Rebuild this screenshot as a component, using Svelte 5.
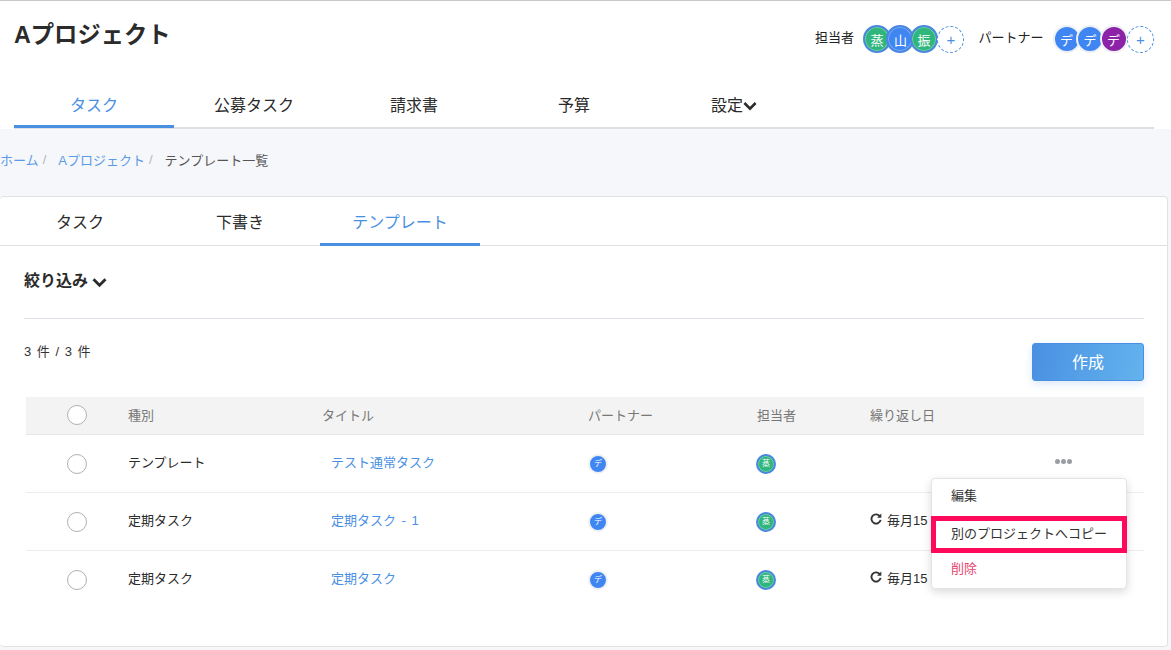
<script>
  const assignees = [
    { t: '蒸', c: 'green' },
    { t: '山', c: 'blue' },
    { t: '振', c: 'green' }
  ];
  const partners = [
    { t: 'デ', c: 'blue' },
    { t: 'デ', c: 'blue' },
    { t: 'デ', c: 'purple' }
  ];
  const mainTabs = ['タスク', '公募タスク', '請求書', '予算'];
  const rows = [
    { kind: 'テンプレート', title: 'テスト通常タスク', repeat: '' },
    { kind: '定期タスク', title: '定期タスク - 1', repeat: '毎月15' },
    { kind: '定期タスク', title: '定期タスク', repeat: '毎月15' }
  ];
</script>

<div class="page">
  <header class="header">
    <div class="top">
      <h1>Aプロジェクト</h1>
      <div class="people">
        <span class="label">担当者</span>
        <div class="stack">
          {#each assignees as a}
            <span class="av ring {a.c}">{a.t}</span>
          {/each}
          <span class="add">+</span>
        </div>
        <span class="label partner">パートナー</span>
        <div class="stack">
          {#each partners as p}
            <span class="av halo {p.c}">{p.t}</span>
          {/each}
          <span class="add">+</span>
        </div>
      </div>
    </div>
    <nav class="nav">
      {#each mainTabs as t, i}
        <span class="tab" class:on={i === 0}>{t}</span>
      {/each}
      <span class="tab">設定<svg class="chev" viewBox="0 0 14 10" width="14" height="10"><path d="M1.4 2 7 7.6 12.6 2" fill="none" stroke="#2b2b2b" stroke-width="2.6"/></svg></span>
    </nav>
  </header>

  <div class="crumbs">
    <span class="link">ホーム</span><span class="sep">/</span>
    <span class="link">Aプロジェクト</span><span class="sep">/</span>
    <span class="cur">テンプレート一覧</span>
  </div>

  <section class="card">
    <div class="subtabs">
      <span class="subtab">タスク</span>
      <span class="subtab">下書き</span>
      <span class="subtab on">テンプレート</span>
    </div>
    <div class="body">
      <div class="filter">絞り込み<svg viewBox="0 0 14 10" width="15" height="11"><path d="M1.4 2 7 7.6 12.6 2" fill="none" stroke="#2b2b2b" stroke-width="2.6"/></svg></div>
      <div class="bar">
        <span class="count">3 件 / 3 件</span>
        <button class="create">作成</button>
      </div>
      <div class="table">
        <div class="row head">
          <span class="check"><i class="radio"></i></span>
          <span>種別</span>
          <span>タイトル</span>
          <span>パートナー</span>
          <span>担当者</span>
          <span>繰り返し日</span>
        </div>
        {#each rows as r, i}
          <div class="row">
            <span class="check"><i class="radio"></i></span>
            <span>{r.kind}</span>
            <span class="title">{r.title}</span>
            <span class="mid"><b class="mini halo blue"><em>デ</em></b></span>
            <span class="mid"><b class="mini ring green"><em>蒸</em></b></span>
            <span class="repeat">
              {#if r.repeat}
                <svg viewBox="0 0 12 12" width="12" height="12"><path d="M9.9 3.4A4.6 4.6 0 1 0 10.6 6.9" fill="none" stroke="#333" stroke-width="1.9"/><path d="M11.3 0.6v4.2H7.1z" fill="#333"/></svg>
                {r.repeat}
              {/if}
            </span>
            {#if i === 0}
              <span class="dots"><i></i><i></i><i></i></span>
            {/if}
          </div>
        {/each}

        <div class="menu">
          <div class="item first">編集</div>
          <div class="item copy">別のプロジェクトへコピー</div>
          <div class="item del">削除</div>
        </div>
      </div>
    </div>
  </section>
</div>

<style>
  :global(body) {
    margin: 0;
    background: #f5f7fa;
  }
  .page {
    width: 1171px;
    height: 650px;
    overflow: hidden;
    box-sizing: border-box;
    background: #f5f7fa;
    color: #2b2b2b;
    font-family: "Liberation Sans", "Noto Sans CJK JP", sans-serif;
  }
  .header {
    height: 129px;
    box-sizing: border-box;
    background: #fff;
    border-top: 1px solid #c9c9c9;
    padding: 0 17px 0 14px;
  }
  .top {
    display: flex;
    justify-content: space-between;
    height: 84px;
  }
  h1 {
    margin: 17px 0 0;
    font-size: 23.3px;
    line-height: 34px;
    font-weight: 700;
  }
  .people {
    display: flex;
    align-items: center;
    height: 28px;
    margin-top: 24px;
  }
  .label {
    font-size: 13px;
    color: #222;
    margin-right: 9px;
    margin-top: -5px;
  }
  .label.partner {
    margin-left: 14px;
    margin-right: 9px;
  }
  .stack {
    display: flex;
    align-items: center;
  }
  .av {
    width: 28px;
    height: 28px;
    box-sizing: border-box;
    border-radius: 50%;
    display: flex;
    align-items: center;
    justify-content: center;
    color: #fff;
    font-size: 13px;
    margin-right: -4.5px;
    flex: none;
  }
  .ring {
    border: 2px solid #4a87e0;
    box-shadow: inset 0 0 0 1px rgba(255, 255, 255, 0.3);
  }
  .halo { border: 2px solid #eef0f3; }
  .green { background: #2fb67c; }
  .blue { background: #3f86f2; }
  .purple { background: #8b22a8; }
  .add {
    width: 27px;
    height: 27px;
    margin-left: 4px;
    box-sizing: border-box;
    border: 1px dashed #4a90e2;
    border-radius: 50%;
    background: #fff;
    color: #4a90e2;
    display: flex;
    align-items: center;
    justify-content: center;
    font-size: 15px;
    flex: none;
    position: relative;
  }
  .nav {
    display: flex;
    height: 44px;
    box-sizing: border-box;
    border-bottom: 2px solid #e0e0e0;
  }
  .tab {
    width: 160px;
    height: 43px;
    box-sizing: border-box;
    display: flex;
    align-items: center;
    justify-content: center;
    font-size: 16px;
    color: #2b2b2b;
    padding-bottom: 2px;
    border-bottom: 3px solid transparent;
    flex: none;
  }
  .tab.on {
    color: #4a90e2;
    border-bottom-color: #4a90e2;
  }
  .chev { margin-top: 3px; }
  .crumbs {
    height: 67px;
    display: flex;
    align-items: center;
    font-size: 13px;
    box-sizing: border-box;
    padding-bottom: 7px;
  }
  .link { color: #5b9ae6; }
  .sep { color: #b5b5b5; margin: 0 12px 0 4px; }
  .cur { color: #555; margin-left: 0; }
  .card {
    width: 1168px;
    height: 451px;
    box-sizing: border-box;
    background: #fff;
    border: 1px solid #e2e2e2;
    border-left: 0;
    border-radius: 4px;
  }
  .subtabs {
    display: flex;
    height: 49px;
    box-sizing: border-box;
    border-bottom: 1px solid #dfdfdf;
  }
  .subtab {
    width: 160px;
    height: 49px;
    box-sizing: border-box;
    display: flex;
    align-items: center;
    justify-content: center;
    font-size: 16px;
    padding-top: 2px;
    border-bottom: 3px solid transparent;
    flex: none;
  }
  .subtab.on {
    color: #4a90e2;
    border-bottom-color: #4a90e2;
  }
  .body {
    padding: 0 23px 0 24px;
  }
  .filter {
    height: 73px;
    box-sizing: border-box;
    border-bottom: 1px solid #dde2e8;
    padding-top: 22px;
    font-size: 16px;
    line-height: 26px;
    font-weight: 700;
    display: flex;
    align-items: flex-start;
    gap: 4px;
  }
  .filter svg { margin-top: 9px; }
  .bar {
    display: flex;
    justify-content: space-between;
    align-items: flex-start;
    height: 78px;
  }
  .count {
    font-size: 13px;
    word-spacing: 2px;
    margin-top: 24px;
    line-height: 18px;
    color: #333;
  }
  .create {
    margin-top: 24px;
    width: 112px;
    height: 38px;
    border: 1px solid #4a90e2;
    border-radius: 3px;
    background: linear-gradient(100deg, #4a90e2, #63b3ed);
    color: #fff;
    font: inherit;
    font-size: 16px;
    box-shadow: 0 3px 8px rgba(74, 144, 226, 0.2);
    padding: 0 0 3px;
  }
  .table {
    margin-left: 2px;
    position: relative;
  }
  .row {
    display: grid;
    grid-template-columns: 102px 194px 266px 169px 113px 1fr;
    align-items: center;
    height: 58px;
    box-sizing: border-box;
    border-bottom: 1px solid #ececec;
    font-size: 13px;
    color: #2b2b2b;
    position: relative;
    padding-bottom: 5px;
  }
  .row:nth-last-child(2) { border-bottom-color: transparent; }
  .row.head {
    height: 38px;
    background: #f3f3f3;
    color: #777;
    border-bottom: 1px solid #e6e6e6;
    padding-bottom: 3px;
  }
  .check {
    display: flex;
    justify-content: flex-start;
    padding-left: 41px;
    padding-top: 6px;
  }
  .head .check { padding-top: 2px; }
  .radio {
    display: block;
    width: 20px;
    height: 20px;
    box-sizing: border-box;
    border: 1px solid #b0b0b0;
    border-radius: 50%;
    background: #fff;
  }
  .title {
    color: #4a90e2;
    padding-left: 9px;
    word-spacing: 2px;
  }
  .mid { padding-top: 6px; }
  .mini {
    display: flex;
    align-items: center;
    justify-content: center;
    width: 20px;
    height: 20px;
    box-sizing: border-box;
    border-radius: 50%;
    overflow: hidden;
  }
  .mini.ring { margin-left: -1px; }
  .mini em {
    font-style: normal;
    font-weight: 400;
    color: #fff;
    font-size: 8px;
    line-height: 1;
  }
  .repeat {
    display: flex;
    align-items: center;
    gap: 5px;
    white-space: nowrap;
  }
  .dots {
    position: absolute;
    left: 1029px;
    top: 24px;
    display: flex;
    gap: 1px;
  }
  .dots i {
    display: block;
    width: 5px;
    height: 5px;
    border-radius: 50%;
    background: #9a9da3;
  }
  .menu {
    position: absolute;
    left: 905px;
    top: 81px;
    width: 196px;
    height: 111px;
    box-sizing: border-box;
    background: #fff;
    border: 1px solid #e4e4e4;
    border-radius: 4px;
    box-shadow: 0 3px 10px rgba(0, 0, 0, 0.15);
    z-index: 2;
    font-size: 13px;
  }
  .item {
    box-sizing: border-box;
    padding-left: 19px;
    display: flex;
    align-items: center;
    color: #333;
  }
  .item.first {
    height: 37px;
    padding-bottom: 6px;
  }
  .item.copy {
    height: 37px;
    margin: 0 -1px;
    padding-left: 15px;
    padding-bottom: 4px;
    border: 5px solid #ff0a5a;
  }
  .item.del {
    height: 35px;
    padding-bottom: 7px;
    color: #e8446f;
  }
</style>
